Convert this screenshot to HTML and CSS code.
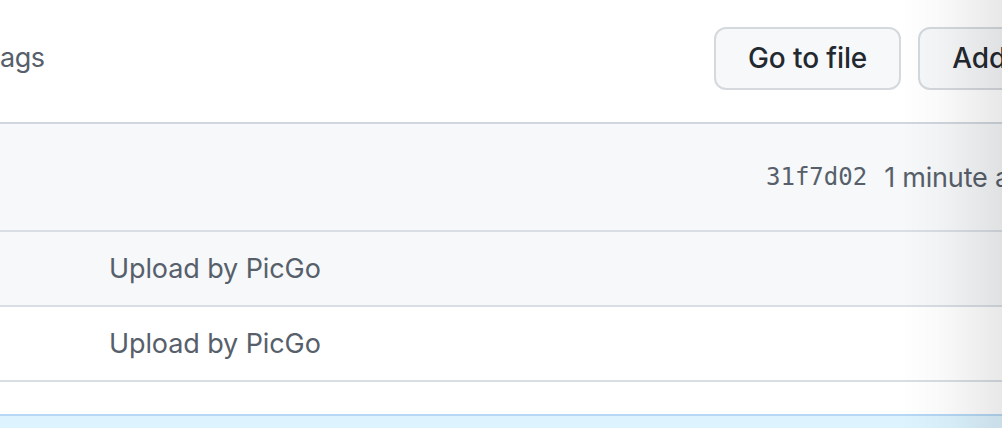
FILE: index.html
```html
<!DOCTYPE html>
<html lang="en">
<head>
<meta charset="utf-8">
<title>Files</title>
<link rel="stylesheet" href="styles.css">
</head>
<body>
<div class="page">
  <div class="toolbar">
    <div class="label">ags</div>
    <div class="actions">
      <button class="btn">Go to file</button>
      <button class="btn">Add file</button>
    </div>
  </div>
  <div class="box">
    <div class="box-header">
      <span class="sha">31f7d02</span>
      <span class="age">1 minute ago</span>
    </div>
    <div class="row row-hover">
      <span class="msg">Upload by PicGo</span>
    </div>
    <div class="row">
      <span class="msg">Upload by PicGo</span>
    </div>
    <div class="row row-empty"></div>
  </div>
  <div class="notice"></div>
</div>
<div class="edge-shade"></div>
</body>
</html>
```

FILE: styles.css
```css
html, body {
  margin: 0;
  padding: 0;
  background: #ffffff;
  overflow: hidden;
  height: 428px;
}
body {
  font-family: Inter, "Noto Sans", "Liberation Sans", sans-serif;
  color: #24292f;
}
.page {
  width: 1200px;
}
.toolbar {
  display: flex;
  align-items: center;
  height: 116px;
  padding-bottom: 6px;
}
.label {
  flex: 0 0 714px;
  font-size: 27px;
  letter-spacing: -0.5px;
  color: #57606a;
  line-height: 40px;
}
.actions {
  display: flex;
  gap: 17px;
}
.btn {
  box-sizing: border-box;
  font-family: inherit;
  font-size: 28px;
  font-weight: 500;
  letter-spacing: -0.1px;
  color: #24292f;
  background: #f6f8fa;
  border: 2px solid #d5d9de;
  border-radius: 12px;
  height: 63px;
  padding: 0 32px;
  line-height: 40px;
}
.box {
  border-top: 2px solid #d0d7de;
}
.box-header {
  display: flex;
  align-items: center;
  height: 106px;
  padding-left: 766px;
  background: #f6f8fa;
  border-bottom: 2px solid #d8dee4;
  color: #57606a;
}
.sha {
  font-family: "DejaVu Sans Mono", "Liberation Mono", monospace;
  font-size: 24px;
  margin-right: 17px;
}
.age {
  font-size: 27px;
  letter-spacing: -0.2px;
}
.row {
  display: flex;
  align-items: center;
  height: 73px;
  padding-left: 109px;
  border-bottom: 2px solid #d8dee4;
  color: #57606a;
  font-size: 27px;
  letter-spacing: -0.1px;
}
.row-hover {
  background: #f6f8fa;
}
.row-empty {
  height: 32px;
  border-bottom: none;
}
.notice {
  height: 40px;
  background: #ddf4ff;
  border-top: 2px solid #b6d8f5;
}
.edge-shade {
  position: fixed;
  top: 0;
  right: 0;
  width: 100px;
  height: 428px;
  background: linear-gradient(to right, rgba(0,0,0,0) 0%, rgba(0,0,0,0.025) 40%, rgba(0,0,0,0.09) 100%);
  pointer-events: none;
}
```
